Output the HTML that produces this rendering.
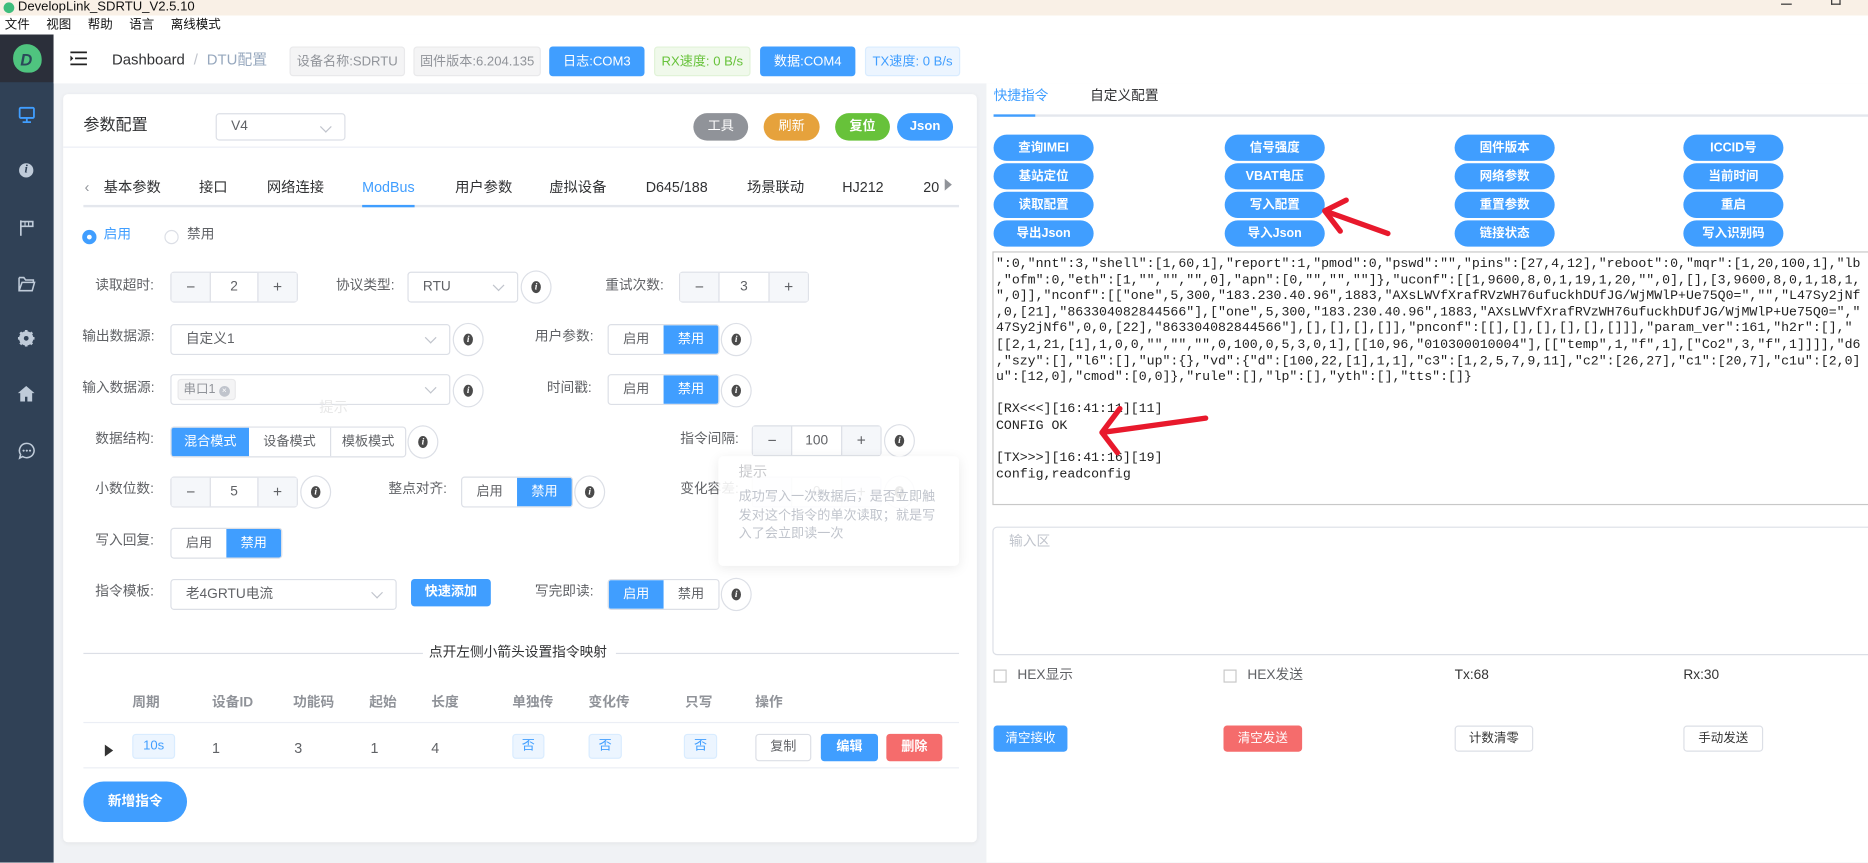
<!DOCTYPE html>
<html><head><meta charset="utf-8">
<style>
*{box-sizing:border-box;margin:0;padding:0}
html,body{width:1868px;height:862px;overflow:hidden;background:#f0f2f5}
#w{position:absolute;left:0;top:0;width:1568px;height:724px;transform:scale(1.19133);transform-origin:0 0;font-family:"Liberation Sans","Noto Sans CJK SC",sans-serif;color:#606266;font-size:11px;background:#f0f2f5}
.a{position:absolute}
.t{position:absolute;white-space:nowrap;line-height:1}
.num{position:absolute;height:26px;border:1px solid #dcdfe6;border-radius:3px;background:#fff;width:107px}
.num .m,.num .p{position:absolute;top:0;width:33px;height:24px;background:#f5f7fa;text-align:center;line-height:24px;color:#606266;font-size:13px}
.num .m{left:0;border-right:1px solid #dcdfe6}.num .p{right:0;border-left:1px solid #dcdfe6}
.num .v{position:absolute;left:33px;right:33px;top:0;line-height:24px;text-align:center;font-size:11.5px;color:#606266}
.info{position:absolute;width:26px;height:28px;border:1px solid #dcdfe6;border-radius:50%;background:#fff}
.info:after{content:"i";position:absolute;left:8px;top:8px;width:8px;height:10px;border-radius:50%;background:#4a4a4a;color:#fff;font:bold italic 8px/10px "Liberation Serif",serif;text-align:center}
.grp{position:absolute;height:26px;display:flex;border:1px solid #dcdfe6;border-radius:3px;overflow:hidden;background:#fff}
.grp span{display:block;height:24px;line-height:24px;text-align:center;font-size:11px;color:#606266}
.grp .on{background:#409eff;color:#fff}
.lbl{position:absolute;white-space:nowrap;font-size:11.5px;color:#606266;text-align:right;line-height:1}
.sel{position:absolute;height:26px;border:1px solid #dcdfe6;border-radius:3px;background:#fff;font-size:11.5px;line-height:24px;padding-left:12px;color:#606266}
.sel:after{content:"";position:absolute;right:12px;top:7px;width:6px;height:6px;border-right:1px solid #c0c4cc;border-bottom:1px solid #c0c4cc;transform:rotate(45deg)}
.qb{position:absolute;width:84px;height:22px;border-radius:11px;background:#409eff;color:#fff;font-weight:bold;font-size:10.5px;text-align:center;line-height:22px}
.tag{position:absolute;height:25px;border-radius:3px;line-height:25px;text-align:center;font-size:11px}
.hd{line-height:23px;padding-top:1px}
.mono{font-family:"Liberation Mono",monospace;font-size:11.1px;color:#222;white-space:pre;line-height:13.6px}
.th{position:absolute;top:581px;font-weight:bold;color:#909399;font-size:11.5px;white-space:nowrap}
</style></head><body><div id="w">
<div class="a" style="left:0;top:0;width:1568px;height:13px;background:#f9f0e6"></div>
<div class="a" style="left:3px;top:2px;width:9px;height:9px;border-radius:50%;background:#3ebd7c"></div>
<div class="t" style="left:15px;top:1px;font-size:11px;color:#111">DevelopLink_SDRTU_V2.5.10</div>
<div class="a" style="left:1495px;top:3px;width:9px;height:1px;background:#333"></div>
<div class="a" style="left:1537px;top:0px;width:8px;height:4px;border:1px solid #333;border-top:none"></div>
<div class="a" style="left:0;top:13px;width:1568px;height:16px;background:#fff"></div>
<div class="t" style="left:4px;top:16px;font-size:10.5px;color:#111;word-spacing:4px">文件&nbsp; 视图&nbsp; 帮助&nbsp; 语言&nbsp; 离线模式</div>
<div class="a" style="left:0;top:29px;width:45px;height:695px;background:#304156"></div>
<div class="a" style="left:0;top:29px;width:45px;height:40px;background:#2b2f3a"></div>
<div class="a" style="left:11px;top:37px;width:24px;height:24px;border-radius:50% 55% 45% 50%;background:#4fc47f"></div>
<div class="t" style="left:17px;top:42px;font:bold italic 14px 'Liberation Sans',sans-serif;color:#2b4a5a">D</div>
<svg class="a" style="left:15px;top:89px" width="15" height="15" viewBox="0 0 15 15"><rect x="1.5" y="1.5" width="12" height="8.5" rx="1" fill="none" stroke="#409eff" stroke-width="1.5"/><path d="M7.5 10v3M4 13.5h7" stroke="#409eff" stroke-width="1.5"/></svg>
<div class="a" style="left:16px;top:137px;width:12px;height:12px;border-radius:50%;background:#bfcbd9;color:#304156;font:bold italic 10px/12px 'Liberation Serif',serif;text-align:center">i</div>
<svg class="a" style="left:16px;top:184px" width="13" height="14" viewBox="0 0 13 14"><path d="M1.5 1v13M1.5 2h10v4h-10" fill="none" stroke="#bfcbd9" stroke-width="1.4"/><path d="M5 2v4M8 2v4" stroke="#bfcbd9"/></svg>
<svg class="a" style="left:15px;top:232px" width="15" height="13" viewBox="0 0 15 13"><path d="M1 1h4l1.5 2H13v2M1 1v11h11l2-7H3.5L1 12" fill="none" stroke="#bfcbd9" stroke-width="1.3"/></svg>
<svg class="a" style="left:15px;top:277px" width="14" height="14" viewBox="0 0 14 14"><circle cx="7" cy="7" r="4.5" fill="none" stroke="#bfcbd9" stroke-width="3"/><path d="M7 0v14M0 7h14M2 2l10 10M12 2L2 12" stroke="#bfcbd9" stroke-width="2.2"/><circle cx="7" cy="7" r="2" fill="#304156"/></svg>
<svg class="a" style="left:15px;top:324px" width="14" height="13" viewBox="0 0 14 13"><path d="M7 0L0 6h2v7h4V9h2v4h4V6h2z" fill="#bfcbd9"/></svg>
<svg class="a" style="left:15px;top:371px" width="15" height="15" viewBox="0 0 15 15"><path d="M7.5 1.2a6.2 6 0 1 1-3.5 11L1.5 13.5l.8-3A6 6 0 0 1 7.5 1.2z" fill="none" stroke="#bfcbd9" stroke-width="1.3"/><circle cx="4.8" cy="7.3" r=".9" fill="#bfcbd9"/><circle cx="7.5" cy="7.3" r=".9" fill="#bfcbd9"/><circle cx="10.2" cy="7.3" r=".9" fill="#bfcbd9"/></svg>
<div class="a" style="left:45px;top:29px;width:1523px;height:41px;background:#fff"></div>
<svg class="a" style="left:59px;top:43px" width="14" height="12" viewBox="0 0 14 12"><path d="M0 1h14M4 6h10M0 11h14" stroke="#222" stroke-width="1.5"/><path d="M0 3.5l2.5 2.5L0 8.5z" fill="#222"/></svg>
<div class="t" style="left:94px;top:44px;font-size:12.5px;color:#303133">Dashboard <span style="color:#c0c4cc;margin:0 4px">/</span> <span style="color:#97a8be">DTU配置</span></div>
<div class="tag hd" style="left:243px;top:39px;width:97px;background:#f4f4f5;border:1px solid #e9e9eb;color:#909399">设备名称:SDRTU</div>
<div class="tag hd" style="left:347px;top:39px;width:107px;background:#f4f4f5;border:1px solid #e9e9eb;color:#909399">固件版本:6.204.135</div>
<div class="tag hd" style="left:461px;top:39px;width:80px;background:#409eff;color:#fff;border:1px solid #409eff">日志:COM3</div>
<div class="tag hd" style="left:549px;top:39px;width:81px;background:#f0f9eb;border:1px solid #e1f3d8;color:#67c23a">RX速度: 0 B/s</div>
<div class="tag hd" style="left:638px;top:39px;width:80px;background:#409eff;color:#fff;border:1px solid #409eff">数据:COM4</div>
<div class="tag hd" style="left:726px;top:39px;width:80px;background:#ecf5ff;border:1px solid #d9ecff;color:#409eff">TX速度: 0 B/s</div>
<div class="a" style="left:53px;top:79px;width:767px;height:628px;background:#fff;border-radius:4px;box-shadow:0 1px 4px rgba(0,0,0,.06)"></div>
<div class="t" style="left:70px;top:98px;font-size:13.5px;color:#303133">参数配置</div>
<div class="sel" style="left:181px;top:95px;width:109px;height:23px;line-height:21px">V4</div>
<div class="tag" style="left:582px;top:95px;width:46px;height:23px;line-height:23px;border-radius:12px;background:#909399;color:#fff">工具</div>
<div class="tag" style="left:641px;top:95px;width:47px;height:23px;line-height:23px;border-radius:12px;background:#e6a23c;color:#fff">刷新</div>
<div class="tag" style="left:701px;top:95px;width:46px;height:23px;line-height:23px;border-radius:12px;background:#67c23a;color:#fff;font-weight:bold">复位</div>
<div class="tag" style="left:753px;top:95px;width:47px;height:23px;line-height:23px;border-radius:12px;background:#409eff;color:#fff;font-weight:bold">Json</div>
<div class="a" style="left:53px;top:123px;width:767px;height:1px;background:#ebeef5"></div>
<div class="t" style="left:71px;top:151px;font-size:12px;color:#909399">‹</div>
<div class="t" style="left:87px;top:151px;font-size:12px;color:#303133">基本参数</div>
<div class="t" style="left:167px;top:151px;font-size:12px;color:#303133">接口</div>
<div class="t" style="left:224px;top:151px;font-size:12px;color:#303133">网络连接</div>
<div class="t" style="left:304px;top:151px;font-size:12px;color:#409eff">ModBus</div>
<div class="t" style="left:382px;top:151px;font-size:12px;color:#303133">用户参数</div>
<div class="t" style="left:461px;top:151px;font-size:12px;color:#303133">虚拟设备</div>
<div class="t" style="left:542px;top:151px;font-size:12px;color:#303133">D645/188</div>
<div class="t" style="left:627px;top:151px;font-size:12px;color:#303133">场景联动</div>
<div class="t" style="left:707px;top:151px;font-size:12px;color:#303133">HJ212</div>
<div class="t" style="left:775px;top:151px;font-size:12px;color:#303133">20</div>
<div class="a" style="left:793px;top:150px;width:0;height:0;border-left:6px solid #909399;border-top:5px solid transparent;border-bottom:5px solid transparent"></div>
<div class="a" style="left:70px;top:172px;width:735px;height:2px;background:#e4e7ed"></div>
<div class="a" style="left:304px;top:172px;width:44px;height:2px;background:#409eff"></div>
<div class="a" style="left:69px;top:193px;width:12px;height:12px;border-radius:50%;background:#409eff"></div>
<div class="a" style="left:73px;top:197px;width:4px;height:4px;border-radius:50%;background:#fff"></div>
<div class="t" style="left:87px;top:192px;font-size:11.5px;color:#409eff">启用</div>
<div class="a" style="left:138px;top:193px;width:12px;height:12px;border-radius:50%;border:1px solid #dcdfe6"></div>
<div class="t" style="left:157px;top:192px;font-size:11.5px;color:#606266">禁用</div>
<div class="lbl" style="left:80px;top:235px">读取超时:</div>
<div class="num" style="left:143px;top:228px"><div class="m">−</div><div class="v">2</div><div class="p">+</div></div>
<div class="lbl" style="left:282px;top:235px">协议类型:</div>
<div class="sel" style="left:342px;top:228px;width:93px">RTU</div>
<div class="info" style="left:437px;top:227px"></div>
<div class="lbl" style="left:508px;top:235px">重试次数:</div>
<div class="num" style="left:570px;top:228px;width:109px"><div class="m">−</div><div class="v">3</div><div class="p">+</div></div>
<div class="lbl" style="left:69px;top:278px">输出数据源:</div>
<div class="sel" style="left:143px;top:272px;width:235px">自定义1</div>
<div class="info" style="left:380px;top:271px"></div>
<div class="lbl" style="left:449px;top:278px">用户参数:</div>
<div class="grp" style="left:510px;top:272px"><span style="width:46px">启用</span><span class="on" style="width:46px">禁用</span></div>
<div class="info" style="left:605px;top:271px"></div>
<div class="lbl" style="left:69px;top:321px">输入数据源:</div>
<div class="sel" style="left:143px;top:314px;width:235px;padding-left:5px"><span style="display:inline-block;background:#f4f4f5;border:1px solid #e9e9eb;border-radius:3px;height:18px;line-height:16px;padding:0 4px;color:#909399;font-size:10.5px;vertical-align:middle">串口1 <span style="display:inline-block;width:9px;height:9px;border-radius:50%;background:#c0c4cc;color:#fff;font-size:7px;line-height:9px;text-align:center">×</span></span></div>
<div class="info" style="left:380px;top:314px"></div>
<div class="lbl" style="left:459px;top:321px">时间戳:</div>
<div class="grp" style="left:510px;top:314px"><span style="width:46px">启用</span><span class="on" style="width:46px">禁用</span></div>
<div class="info" style="left:605px;top:314px"></div>
<div class="t" style="left:268px;top:336px;font-size:12px;color:#e8e8e8">提示</div>
<div class="t" style="left:270px;top:366px;font-size:11px;color:#ececec">结果小数位数</div>
<div class="lbl" style="left:80px;top:364px">数据结构:</div>
<div class="grp" style="left:143px;top:358px"><span class="on" style="width:65px">混合模式</span><span style="width:69px;border-right:1px solid #dcdfe6">设备模式</span><span style="width:62px">模板模式</span></div>
<div class="info" style="left:342px;top:357px"></div>
<div class="lbl" style="left:571px;top:364px">指令间隔:</div>
<div class="num" style="left:631px;top:357px;width:109px"><div class="m">−</div><div class="v">100</div><div class="p">+</div></div>
<div class="info" style="left:742px;top:356px"></div>
<div class="lbl" style="left:80px;top:406px">小数位数:</div>
<div class="num" style="left:143px;top:400px"><div class="m">−</div><div class="v">5</div><div class="p">+</div></div>
<div class="info" style="left:252px;top:399px"></div>
<div class="lbl" style="left:326px;top:406px">整点对齐:</div>
<div class="grp" style="left:387px;top:400px"><span style="width:46px">启用</span><span class="on" style="width:46px">禁用</span></div>
<div class="info" style="left:482px;top:399px"></div>
<div class="lbl" style="left:571px;top:406px">变化容差:</div>
<div class="num" style="left:631px;top:400px;width:109px"><div class="m">−</div><div class="v">0</div><div class="p">+</div></div>
<div class="info" style="left:742px;top:399px"></div>
<div class="a" style="left:603px;top:383px;width:202px;height:92px;background:rgba(255,255,255,.88);border-radius:4px;box-shadow:0 2px 10px rgba(0,0,0,.08)"></div>
<div class="t" style="left:620px;top:390px;font-size:12px;color:#c8c9cc">提示</div>
<div class="a" style="left:620px;top:410px;width:172px;font-size:11px;color:#c0c4cc;line-height:15.5px">成功写入一次数据后，是否立即触发对这个指令的单次读取；就是写入了会立即读一次</div>
<div class="lbl" style="left:80px;top:449px">写入回复:</div>
<div class="grp" style="left:143px;top:443px"><span style="width:46px">启用</span><span class="on" style="width:46px">禁用</span></div>
<div class="lbl" style="left:80px;top:492px">指令模板:</div>
<div class="sel" style="left:143px;top:486px;width:190px">老4GRTU电流</div>
<div class="tag" style="left:345px;top:486px;width:67px;height:23px;line-height:23px;background:#409eff;color:#fff;font-weight:bold">快速添加</div>
<div class="lbl" style="left:449px;top:492px">写完即读:</div>
<div class="grp" style="left:510px;top:486px"><span class="on" style="width:46px">启用</span><span style="width:46px">禁用</span></div>
<div class="info" style="left:605px;top:485px"></div>
<div class="a" style="left:70px;top:548px;width:285px;height:1px;background:#dcdfe6"></div>
<div class="a" style="left:517px;top:548px;width:288px;height:1px;background:#dcdfe6"></div>
<div class="t" style="left:360px;top:543px;font-size:11.5px;color:#303133">点开左侧小箭头设置指令映射</div>
<div class="th" style="left:111px">周期</div><div class="th" style="left:178px">设备ID</div><div class="th" style="left:246px">功能码</div><div class="th" style="left:310px">起始</div><div class="th" style="left:362px">长度</div><div class="th" style="left:430px">单独传</div><div class="th" style="left:494px">变化传</div><div class="th" style="left:575px">只写</div><div class="th" style="left:634px">操作</div>
<div class="a" style="left:70px;top:606px;width:735px;height:1px;background:#ebeef5"></div>
<div class="a" style="left:88px;top:625px;width:0;height:0;border-left:7px solid #333;border-top:5px solid transparent;border-bottom:5px solid transparent"></div>
<div class="tag" style="left:111px;top:616px;width:36px;height:21px;line-height:19px;background:#ecf5ff;border:1px solid #d9ecff;color:#409eff">10s</div>
<div class="t" style="left:178px;top:622px;font-size:12px">1</div>
<div class="t" style="left:247px;top:622px;font-size:12px">3</div>
<div class="t" style="left:311px;top:622px;font-size:12px">1</div>
<div class="t" style="left:362px;top:622px;font-size:12px">4</div>
<div class="tag" style="left:430px;top:616px;width:27px;height:21px;line-height:19px;background:#ecf5ff;border:1px solid #d9ecff;color:#409eff">否</div>
<div class="tag" style="left:494px;top:616px;width:28px;height:21px;line-height:19px;background:#ecf5ff;border:1px solid #d9ecff;color:#409eff">否</div>
<div class="tag" style="left:574px;top:616px;width:28px;height:21px;line-height:19px;background:#ecf5ff;border:1px solid #d9ecff;color:#409eff">否</div>
<div class="tag" style="left:634px;top:616px;width:47px;height:23px;line-height:21px;border:1px solid #dcdfe6;background:#fff;color:#606266">复制</div>
<div class="tag" style="left:689px;top:616px;width:48px;height:23px;line-height:23px;background:#409eff;color:#fff;font-weight:bold">编辑</div>
<div class="tag" style="left:744px;top:616px;width:47px;height:23px;line-height:23px;background:#f56c6c;color:#fff;font-weight:bold">删除</div>
<div class="a" style="left:70px;top:644px;width:735px;height:1px;background:#ebeef5"></div>
<div class="tag" style="left:70px;top:656px;width:87px;height:34px;line-height:34px;border-radius:17px;background:#409eff;color:#fff;font-weight:bold;font-size:11.5px">新增指令</div>
<div class="a" style="left:828px;top:70px;width:740px;height:654px;background:#fff"></div>
<div class="t" style="left:834px;top:76px;font-size:11.5px;color:#409eff">快捷指令</div>
<div class="t" style="left:915px;top:76px;font-size:11.5px;color:#303133">自定义配置</div>
<div class="a" style="left:834px;top:96px;width:734px;height:2px;background:#e4e7ed"></div>
<div class="a" style="left:834px;top:96px;width:35px;height:2px;background:#409eff"></div>
<div class="qb" style="left:834px;top:113px">查询IMEI</div><div class="qb" style="left:1028px;top:113px">信号强度</div><div class="qb" style="left:1221px;top:113px">固件版本</div><div class="qb" style="left:1413px;top:113px">ICCID号</div>
<div class="qb" style="left:834px;top:137px">基站定位</div><div class="qb" style="left:1028px;top:137px">VBAT电压</div><div class="qb" style="left:1221px;top:137px">网络参数</div><div class="qb" style="left:1413px;top:137px">当前时间</div>
<div class="qb" style="left:834px;top:161px">读取配置</div><div class="qb" style="left:1028px;top:161px">写入配置</div><div class="qb" style="left:1221px;top:161px">重置参数</div><div class="qb" style="left:1413px;top:161px">重启</div>
<div class="qb" style="left:834px;top:185px">导出Json</div><div class="qb" style="left:1028px;top:185px">导入Json</div><div class="qb" style="left:1221px;top:185px">链接状态</div><div class="qb" style="left:1413px;top:185px">写入识别码</div>
<div class="a mono" style="left:833px;top:211px;width:740px;height:213px;border:1px solid #c8c8c8;padding:4px 0 0 2px;overflow:hidden">":0,"nnt":3,"shell":[1,60,1],"report":1,"pmod":0,"pswd":"","pins":[27,4,12],"reboot":0,"mqr":[1,20,100,1],"lb
,"ofm":0,"eth":[1,"","","",0],"apn":[0,"","",""]},"uconf":[[1,9600,8,0,1,19,1,20,"",0],[],[3,9600,8,0,1,18,1,
",0]],"nconf":[["one",5,300,"183.230.40.96",1883,"AXsLWVfXrafRVzWH76ufuckhDUfJG/WjMWlP+Ue75Q0=","","L47Sy2jNf
,0,[21],"863304082844566"],["one",5,300,"183.230.40.96",1883,"AXsLWVfXrafRVzWH76ufuckhDUfJG/WjMWlP+Ue75Q0=","
47Sy2jNf6",0,0,[22],"863304082844566"],[],[],[],[]],"pnconf":[[],[],[],[],[],[]]],"param_ver":161,"h2r":[],"
[[2,1,21,[1],1,0,0,"","","",0,100,0,5,3,0,1],[[10,96,"010300010004"],[["temp",1,"f",1],["Co2",3,"f",1]]]],"d6
,"szy":[],"l6":[],"up":{},"vd":{"d":[100,22,[1],1,1],"c3":[1,2,5,7,9,11],"c2":[26,27],"c1":[20,7],"c1u":[2,0]
u":[12,0],"cmod":[0,0]},"rule":[],"lp":[],"yth":[],"tts":[]}

[RX&lt;&lt;&lt;][16:41:11][11]
CONFIG OK

[TX&gt;&gt;&gt;][16:41:16][19]
config,readconfig</div>
<div class="a" style="left:833px;top:442px;width:740px;height:108px;border:1px solid #dcdfe6;border-radius:4px"></div>
<div class="t" style="left:847px;top:450px;font-size:11.5px;color:#c0c4cc">输入区</div>
<div class="a" style="left:834px;top:562px;width:11px;height:11px;border:1px solid #c8c8c8"></div>
<div class="t" style="left:854px;top:562px;font-size:11.5px">HEX显示</div>
<div class="a" style="left:1027px;top:562px;width:11px;height:11px;border:1px solid #c8c8c8"></div>
<div class="t" style="left:1047px;top:562px;font-size:11.5px">HEX发送</div>
<div class="t" style="left:1221px;top:562px;font-size:11.5px;color:#333">Tx:68</div>
<div class="t" style="left:1413px;top:562px;font-size:11.5px;color:#333">Rx:30</div>
<div class="tag" style="left:834px;top:609px;width:62px;height:22px;line-height:22px;background:#409eff;color:#fff;font-size:10.5px">清空接收</div>
<div class="tag" style="left:1027px;top:609px;width:66px;height:22px;line-height:22px;background:#f56c6c;color:#fff;font-size:10.5px">清空发送</div>
<div class="tag" style="left:1221px;top:609px;width:66px;height:22px;line-height:20px;border:1px solid #dcdfe6;background:#fff;color:#333;font-size:10.5px">计数清零</div>
<div class="tag" style="left:1413px;top:609px;width:67px;height:22px;line-height:20px;border:1px solid #dcdfe6;background:#fff;color:#333;font-size:10.5px">手动发送</div>
<svg class="a" style="left:0;top:0" width="1568" height="724"><g fill="none" stroke="#e8192c" stroke-width="4.5" stroke-linecap="round" stroke-linejoin="round"><path d="M1165 196L1112 177M1112 177L1130 168M1112 177L1125 194"/><path d="M1012 351L925 363M925 363L940 343M925 363L938 380"/></g></svg>
</div></body></html>
